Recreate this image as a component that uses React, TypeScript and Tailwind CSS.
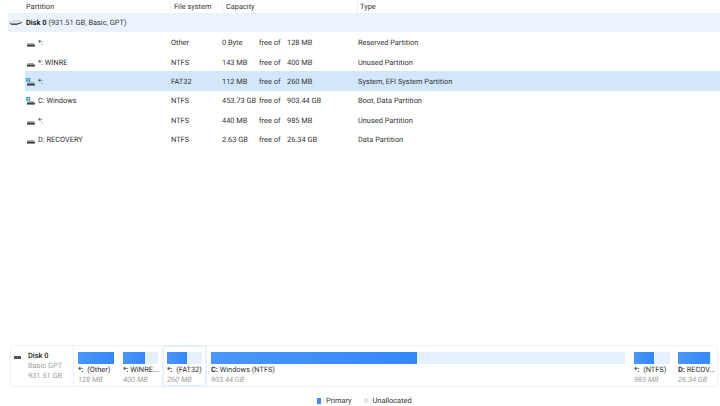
const F = "font-['Roboto','Noto_Sans',sans-serif] [text-rendering:geometricPrecision]";

function DriveIcon({ win }: { win?: boolean }) {
  return (
    <svg width="9" height="8" viewBox="0 0 9 8" className="shrink-0">
      {win && (
        <g fill="#2aa5de">
          <rect x="0" y="0" width="2" height="1.7" />
          <rect x="2.4" y="0" width="2" height="1.7" />
          <rect x="0" y="2" width="2" height="1.7" />
          <rect x="2.4" y="2" width="2" height="1.7" />
        </g>
      )}
      <path d="M1.6 4.2 H7.6 L8.8 5.6 V7.4 H1 V5.6 Z" fill="#8a9094" />
      <rect x="1" y="6" width="7.8" height="1.4" fill="#363b3f" />
    </svg>
  );
}

function DiskIcon() {
  return (
    <svg width="13" height="6" viewBox="0 0 13 6" className="shrink-0">
      <path d="M0 2.6 L4 0.6 H11 L13 2 L7.5 3.6 H2.5 Z" fill="#e3e6e8" stroke="#a9aeb2" strokeWidth="0.3" />
      <path d="M2.5 3.4 H7.5 L13 2 V3 L7.5 5 H2.5 L0 2.6 Z" fill="#50555a" />
    </svg>
  );
}

const rows = [
  { name: "*:", fs: "Other", free: "0 Byte", total: "128 MB", type: "Reserved Partition" },
  { name: "*: WINRE", fs: "NTFS", free: "143 MB", total: "400 MB", type: "Unused Partition" },
  { name: "*:", fs: "FAT32", free: "112 MB", total: "260 MB", type: "System, EFI System Partition", win: true, sel: true },
  { name: "C: Windows", fs: "NTFS", free: "453.73 GB", total: "903.44 GB", type: "Boot, Data Partition", win: true },
  { name: "*:", fs: "NTFS", free: "440 MB", total: "985 MB", type: "Unused Partition" },
  { name: "D: RECOVERY", fs: "NTFS", free: "2.63 GB", total: "26.34 GB", type: "Data Partition" },
];

const cells = [
  { w: "w-[45px]", bar: "w-[36px]", fill: "w-[36px]", a: "*:", b: "\u00a0(Other)", size: "128 MB" },
  { w: "w-[43px]", bar: "w-[35px]", fill: "w-[22px]", a: "*:", b: "WINRE...", size: "400 MB" },
  { w: "w-[45px]", bar: "w-[35px]", fill: "w-[20px]", a: "*:", b: "\u00a0(FAT32)", size: "260 MB", sel: true },
  { w: "w-[423px]", bar: "w-[414px]", fill: "w-[206px]", a: "C:", b: "Windows (NTFS)", size: "903.44 GB" },
  { w: "w-[44px]", bar: "w-[36px]", fill: "w-[20px]", a: "*:", b: "\u00a0(NTFS)", size: "985 MB" },
  { w: "w-[43px]", bar: "w-[33px]", fill: "w-[32px]", a: "D:", b: "RECOV...", size: "26.34 GB" },
];

export default function App() {
  return (
    <div className={`${F} w-[720px] h-[406px] bg-white flex flex-col overflow-hidden text-[7.4px] leading-[12px] text-[#333333]`}>
      <div className="flex h-[13px] items-center pl-[26px]">
        <div className="w-[144px]">Partition</div>
        <div className="w-[52px] border-l border-[#eeeeee] pl-[3px]">File system</div>
        <div className="w-[135px] border-l border-[#eeeeee] pl-[3px]">Capacity</div>
        <div className="border-l border-[#eeeeee] pl-[2px]">Type</div>
      </div>
      <div className="ml-[8px] h-[19px] bg-[#ebf4fd] flex items-center pl-[1px]">
        <DiskIcon />
        <span className="ml-[4px]"><b className="font-bold text-[#222]">Disk 0</b> (931.51 GB, Basic, GPT)</span>
      </div>
      <div className="pt-[0.5px]">
        {rows.map((r, i) => (
          <div key={i} className={`flex h-[19.4px] items-center ml-[25px] pt-[2px] ${r.sel ? "bg-[#d3e7fb]" : ""}`}>
            <div className="w-[146px] flex items-center gap-[3px] pl-[1px]">
              <DriveIcon win={r.win} />
              <span>{r.name}</span>
            </div>
            <div className="w-[51px]">{r.fs}</div>
            <div className="w-[37px] whitespace-nowrap">{r.free}</div>
            <div className="w-[28px]">free of</div>
            <div className="w-[71px]">{r.total}</div>
            <div>{r.type}</div>
          </div>
        ))}
      </div>
      <div className="flex-1" />
      <div className="ml-[10px] mr-[2px] h-[42px] border border-[#eef2f6] rounded-[2px] flex items-stretch">
        <div className="w-[63px] shrink-0 border-r border-[#eef2f6] flex">
          <div className="pl-[3px] pt-[10px]">
            <div className="w-[7px] h-[3px] bg-[#50565a]" />
          </div>
          <div className="pl-[7px] pt-[5px]">
            <div className="font-medium text-[#222] h-[10px] leading-[10px]">Disk 0</div>
            <div className="text-[#a0a0a0] h-[10px] leading-[10px]">Basic GPT</div>
            <div className="text-[#a0a0a0] h-[10px] leading-[10px]">931.51 GB</div>
          </div>
        </div>
        {cells.map((c, i) => (
          <div key={i} className={`${c.w} shrink-0 ${c.sel ? "-my-px border-2 border-[#e6effa] rounded-[2px] pl-[3px] pt-[5px]" : "pl-[4px] pt-[6px]"}`}>
            <div className={`${c.bar} h-[12px] bg-[#e5f1fd]`}>
              <div className={`${c.fill} h-full bg-gradient-to-r from-[#4a96f9] to-[#3388f8]`} />
            </div>
            <div className="whitespace-nowrap h-[10px] leading-[10px] mt-[1px] text-[#333]">
              <b className="font-bold">{c.a}</b> {c.b}
            </div>
            <div className="italic text-[#a0a0a0] h-[9px] leading-[9px]">{c.size}</div>
          </div>
        ))}
      </div>
      <div className="h-[19px] flex items-center pl-[317px] pt-[8px]">
        <div className="w-[4px] h-[6px] bg-[#3b8cf8]" />
        <span className="ml-[5px]">Primary</span>
        <div className="ml-[12px] w-[4px] h-[5px] bg-[#e6e6e6]" />
        <span className="ml-[5px]">Unallocated</span>
      </div>
    </div>
  );
}
